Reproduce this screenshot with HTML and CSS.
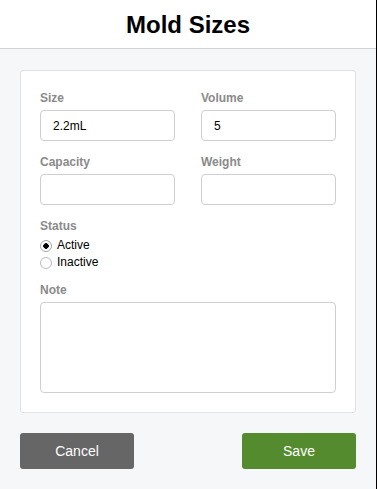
FILE: index.html
```html
<!DOCTYPE html>
<html lang="en">
<head>
    <meta charset="UTF-8" />
    <meta name="viewport" content="width=device-width, initial-scale=1.0" />
    <title>Mold Sizes</title>
    <link rel="stylesheet" href="styles.css">
</head>
<body>
    <div class="page">
        <div class="header">
            <h1>Mold Sizes</h1>
        </div>
        <form class="content" onsubmit="return false;">
            <div class="card">
                <!-- Size / Volume -->
                <div class="row">
                    <div class="form-group">
                        <label for="size">Size</label>
                        <input type="text" id="size" name="size" value="2.2mL">
                    </div>
                    <div class="form-group">
                        <label for="volume">Volume</label>
                        <input type="text" id="volume" name="volume" value="5">
                    </div>
                </div>
                <!-- Capacity / Weight -->
                <div class="row">
                    <div class="form-group">
                        <label for="capacity">Capacity</label>
                        <input type="text" id="capacity" name="capacity">
                    </div>
                    <div class="form-group">
                        <label for="weight">Weight</label>
                        <input type="text" id="weight" name="weight">
                    </div>
                </div>
                <!-- Status -->
                <div class="form-group status">
                    <label>Status</label>
                    <div class="radio-list">
                        <label class="radio"><input type="radio" name="status" value="active" checked> Active</label>
                        <label class="radio"><input type="radio" name="status" value="inactive"> Inactive</label>
                    </div>
                </div>
                <!-- Note -->
                <div class="form-group last">
                    <label for="note">Note</label>
                    <textarea id="note" name="note"></textarea>
                </div>
            </div>
            <div class="btns">
                <button type="button" class="btn-cancel">Cancel</button>
                <button type="submit" class="btn-save">Save</button>
            </div>
        </form>
    </div>
</body>
</html>
```

FILE: styles.css
```css
body {
    font-family: "Liberation Sans", Arial, sans-serif;
    margin: 0;
    padding: 0;
    background-color: #f6f7f9;
}
.page {
    min-height: 100vh;
    box-sizing: border-box;
    border-right: 1px solid #000;
}
.header {
    height: 48px;
    background: #ffffff;
    border-bottom: 1px solid #d2d2d2;
    display: flex;
    justify-content: center;
    align-items: center;
}
h1 {
    margin: 0;
    font-size: 24px;
    font-weight: bold;
    color: #000;
    padding-top: 2px;
}
.content {
    padding: 21px 20px 20px;
}
.card {
    background: #ffffff;
    border: 1px solid #e2e2e2;
    border-radius: 3px;
    padding: 20px 19px 19px;
}
.row {
    display: grid;
    grid-template-columns: 1fr 1fr;
    gap: 26px;
}
.form-group {
    display: flex;
    flex-direction: column;
    margin-bottom: 14px;
}
.form-group.status {
    margin-bottom: 12px;
}
.form-group.last {
    margin-bottom: 0;
}
.form-group > label {
    font-size: 12px;
    line-height: 15px;
    font-weight: bold;
    color: #8a8a8a;
    margin-bottom: 4px;
}
.form-group input[type="text"], .form-group textarea {
    height: 31px;
    padding: 0 12px;
    font-family: inherit;
    font-size: 12px;
    color: #000;
    border: 1px solid #cfcfcf;
    border-radius: 4px;
    width: 100%;
    box-sizing: border-box;
    outline: none;
}
.form-group textarea {
    height: 91px;
    padding: 8px 12px;
    resize: none;
}
.radio-list {
    display: flex;
    flex-direction: column;
    margin-top: -1px;
}
.radio {
    display: flex;
    align-items: center;
    gap: 5px;
    font-size: 12px;
    line-height: 17px;
    color: #000;
    cursor: pointer;
}
.radio input {
    appearance: none;
    -webkit-appearance: none;
    width: 12px;
    height: 12px;
    margin: 0;
    border: 1px solid #b9b9b9;
    border-radius: 50%;
    background: #fff;
}
.radio input:checked {
    background: radial-gradient(circle, #000 0 2.5px, #fff 3px);
    border-color: #a8a8a8;
}
.btns {
    display: flex;
    justify-content: space-between;
    margin-top: 20px;
}
.btns button {
    width: 114px;
    height: 36px;
    font-family: inherit;
    font-size: 14px;
    color: #ffffff;
    border: none;
    border-radius: 3px;
    cursor: pointer;
}
.btn-cancel {
    background: #666666;
}
.btn-save {
    background: #558b2f;
}
```
